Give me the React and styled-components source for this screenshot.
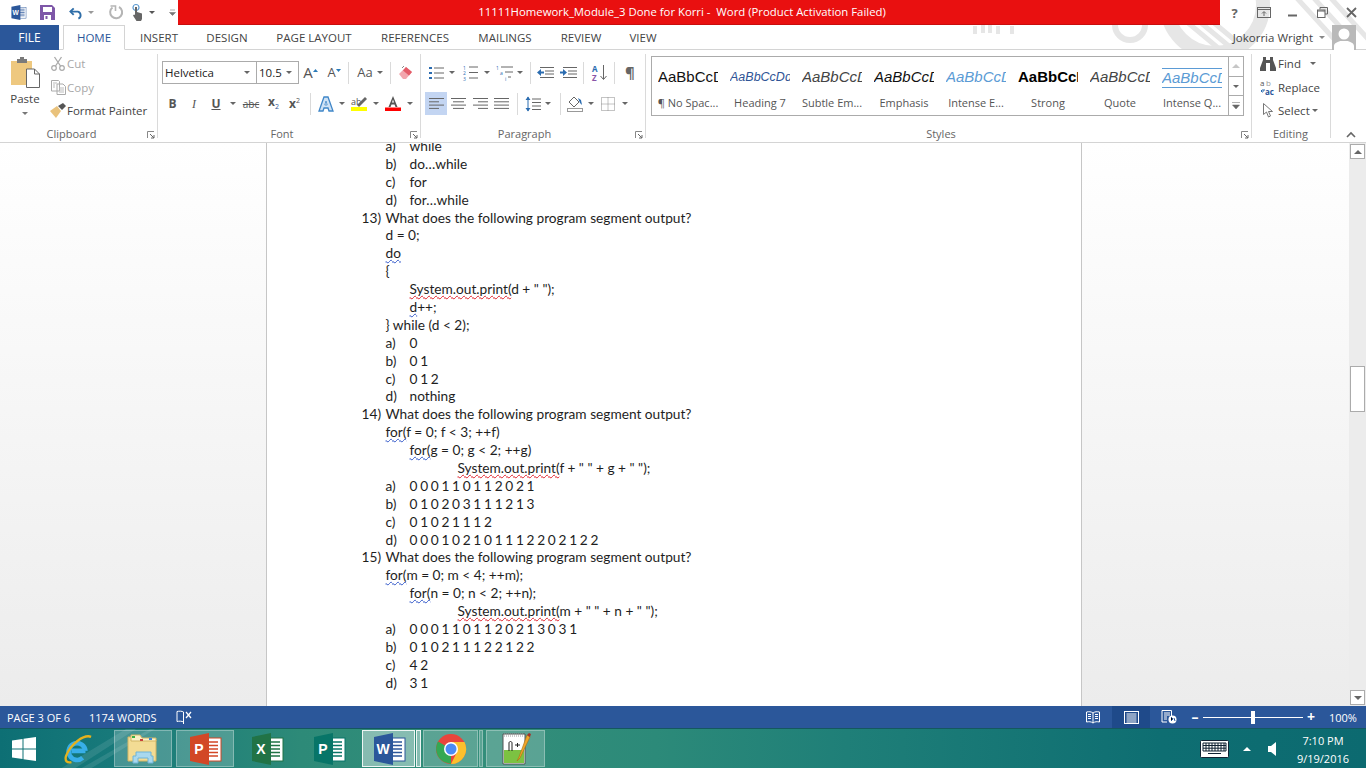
import React from "react";
import styled, { createGlobalStyle } from "styled-components";

const Global = createGlobalStyle`
    html, body { margin: 0; padding: 0; background: #fff; overflow: hidden; }
    * { box-sizing: border-box; }
    #root { width: 1366px; height: 768px; }
    svg { overflow: visible; }
`;

const Screen = styled.div`
    width: 1366px;
    height: 768px;
    display: flex;
    flex-direction: column;
    overflow: hidden;
    font-family: "Open Sans", "Liberation Sans", sans-serif;
    font-size: 11.5px;
    color: #444;
`;

/* ---------- header ---------- */
const Header = styled.div`
    position: relative;
    height: 50px;
    flex: none;
    background: #fff;
`;
const Art = styled.svg`
    position: absolute;
    left: 900px;
    top: 0;
    overflow: hidden;
    pointer-events: none;
`;
const TitleRow = styled.div`
    position: relative;
    height: 25px;
    display: flex;
`;
const Quick = styled.div`
    width: 178px;
    flex: none;
    display: flex;
    align-items: center;
    padding-left: 10px;
`;
const QuickItem = styled.span`
    width: ${(p) => p.$w}px;
    flex: none;
    display: flex;
    align-items: center;
`;
const TitleBar = styled.div`
    width: 1042px;
    height: 24.5px;
    flex: none;
    background: #e91010;
    border-bottom: 1px solid #c90d0d;
    color: #fff;
    font-size: 11.35px;
    padding-right: 34px;
    display: flex;
    align-items: center;
    justify-content: center;
    white-space: pre;
`;
const WindowBtns = styled.div`
    flex: 1;
    display: flex;
    align-items: center;
`;
const WinBtn = styled.span`
    width: 29.2px;
    display: flex;
    justify-content: center;
    color: #666;
    font-weight: 700;
    font-size: 13px;
`;
const TabRow = styled.div`
    position: relative;
    height: 25px;
    display: flex;
    align-items: stretch;
    border-bottom: 1px solid #d4d4d4;
`;
const FileTab = styled.div`
    width: 59px;
    margin-bottom: -1px;
    background: #2b579a;
    color: #fff;
    font-size: 12px;
    display: flex;
    align-items: center;
    justify-content: center;
`;
const Tab = styled.div`
    width: ${(p) => p.$w}px;
    flex: none;
    font-size: 11.5px;
    display: flex;
    align-items: center;
    justify-content: center;
    color: ${(p) => (p.$active ? "#2b579a" : "#444")};
    margin-left: ${(p) => p.$ml || 0}px;
    ${(p) =>
        p.$active &&
        `border: 1px solid #d4d4d4; border-bottom: 1px solid #fff; margin-bottom: -1px; background: #fff;`}
`;
const User = styled.div`
    margin-left: auto;
    display: flex;
    align-items: center;
    font-size: 11.5px;
    color: #444;
    padding-right: 10px;
`;
const Avatar = styled.svg`
    display: block;
    margin-left: 7px;
`;

/* ---------- ribbon ---------- */
const Ribbon = styled.div`
    height: 93px;
    flex: none;
    display: flex;
    background: #fff;
    border-bottom: 1px solid #d4d4d4;
`;
const Group = styled.div`
    position: relative;
    width: ${(p) => p.$w}px;
    flex: none;
    display: flex;
    flex-direction: column;
    &::after {
        content: "";
        position: absolute;
        right: 0;
        top: 4px;
        bottom: 4px;
        width: 1px;
        background: #dadada;
    }
`;
const GroupBody = styled.div`
    flex: 1;
    min-height: 0;
    display: flex;
    padding-left: ${(p) => p.$pl || 0}px;
`;
const GroupLabel = styled.div`
    height: 16px;
    flex: none;
    font-size: 11px;
    line-height: 16px;
    color: #666;
    text-align: center;
    padding-right: ${(p) => p.$pr || 0}px;
`;
const Launcher = styled.svg`
    position: absolute;
    right: 3px;
    bottom: 3px;
`;
const PasteCol = styled.div`
    width: 44px;
    flex: none;
    display: flex;
    flex-direction: column;
    align-items: center;
    padding: 7px 0 0 6px;
`;
const PasteLabel = styled.div`
    margin-top: 3px;
    font-size: 11.5px;
    line-height: 16px;
    color: #444;
`;
const PasteCaret = styled.i`
    margin-top: 5px;
    border-left: 3px solid transparent;
    border-right: 3px solid transparent;
    border-top: 3px solid #777;
`;
const SmallCol = styled.div`
    display: flex;
    flex-direction: column;
    padding-top: 2px;
    margin-left: ${(p) => p.$ml || 0}px;
`;
const SmallBtn = styled.div`
    height: 23.5px;
    display: flex;
    align-items: center;
    white-space: nowrap;
    font-size: 11.5px;
    color: ${(p) => (p.$off ? "#a8a8a8" : "#444")};
`;
const SmallIcon = styled.span`
    width: ${(p) => p.$w || 18}px;
    flex: none;
    display: flex;
    justify-content: center;
`;
const ToolStack = styled.div`
    display: flex;
    flex-direction: column;
    gap: 8px;
    padding: 11px 0 0 4px;
`;
const ToolRow = styled.div`
    height: 23px;
    display: flex;
    align-items: center;
`;
const Tool = styled.span`
    width: ${(p) => p.$w}px;
    height: 23px;
    flex: none;
    display: flex;
    align-items: center;
    justify-content: center;
    color: #555;
    background: ${(p) => (p.$on ? "#c3d5f2" : "transparent")};
`;
const Sep = styled.span`
    width: 1px;
    height: 22px;
    flex: none;
    background: #dadada;
    margin-left: ${(p) => p.$ml || 0}px;
    margin-right: ${(p) => p.$mr || 0}px;
`;
const Caret = styled.i`
    display: inline-block;
    width: 0;
    height: 0;
    margin-left: ${(p) => p.$ml || 0}px;
    border-left: 3px solid transparent;
    border-right: 3px solid transparent;
    border-top: 3px solid ${(p) => p.$color || "#666"};
`;
const FontBox = styled.div`
    width: ${(p) => p.$w}px;
    height: 23px;
    flex: none;
    display: flex;
    align-items: center;
    justify-content: space-between;
    padding: 0 6px 0 2px;
    margin-left: ${(p) => p.$ml || 0}px;
    border: 1px solid #ababab;
    color: #222;
    font-size: 11.5px;
`;
const ToolGlyph = styled.span`
    font-family: ${(p) => (p.$serif ? '"Liberation Serif", serif' : '"Open Sans", sans-serif')};
    font-weight: ${(p) => p.$weight || 400};
    font-style: ${(p) => (p.$italic ? "italic" : "normal")};
    font-size: ${(p) => p.$size || 13}px;
    color: ${(p) => p.$color || "#555"};
    text-decoration: ${(p) => p.$deco || "none"};
    line-height: 1;
`;
const Sub = styled.span`
    font-size: 7px;
    color: ${(p) => p.$color || "#2b579a"};
    vertical-align: ${(p) => (p.$up ? "super" : "sub")};
    font-weight: 400;
`;

/* ---------- styles gallery ---------- */
const Gallery = styled.div`
    width: 593px;
    height: 60px;
    margin: 6px 0 0 5px;
    display: flex;
    border: 1px solid #ababab;
`;
const GalleryItems = styled.div`
    flex: 1;
    display: flex;
`;
const StyleCard = styled.div`
    width: 72px;
    flex: none;
    display: flex;
    flex-direction: column;
    align-items: center;
`;
const Preview = styled.div`
    width: 60px;
    height: 26px;
    margin-top: 7px;
    overflow: hidden;
    white-space: nowrap;
    text-align: left;
    font-family: "Liberation Sans", sans-serif;
    font-size: 15px;
    line-height: 26px;
    color: ${(p) => p.$color || "#111"};
    font-style: ${(p) => (p.$italic ? "italic" : "normal")};
    font-weight: ${(p) => (p.$bold ? 700 : 400)};
    ${(p) =>
        p.$lined &&
        "border-top: 1px solid #5b9bd5; border-bottom: 1px solid #5b9bd5; height: 20px; margin-top: 11px; margin-bottom: 2px; line-height: 18px;"}
    ${(p) => p.$small && "font-size: 12.5px;"}
`;
const StyleName = styled.div`
    margin-top: 5px;
    font-size: 11px;
    line-height: 16px;
    color: #555;
    white-space: nowrap;
`;
const GalleryScroll = styled.div`
    width: 15px;
    flex: none;
    display: flex;
    flex-direction: column;
    border-left: 1px solid #ababab;
`;
const GalleryBtn = styled.div`
    flex: 1;
    display: flex;
    align-items: center;
    justify-content: center;
    & + & {
        border-top: 1px solid #ababab;
    }
`;
const UpCaret = styled.i`
    width: 0;
    height: 0;
    border-left: 4px solid transparent;
    border-right: 4px solid transparent;
    border-bottom: 4px solid ${(p) => p.$color || "#c6c6c6"};
`;
const Collapse = styled.div`
    display: flex;
    align-self: flex-end;
    margin: 0 0 4px 15px;
`;

/* ---------- document ---------- */
const Doc = styled.div`
    flex: 1;
    min-height: 0;
    display: flex;
    background: linear-gradient(#fff, #ececec);
`;
const Canvas = styled.div`
    flex: 1;
    display: flex;
    padding-left: 266px;
    overflow: hidden;
`;
const Page = styled.div`
    width: 816px;
    background: #fff;
    border-left: 1px solid #c6c6c6;
    border-right: 1px solid #c6c6c6;
    overflow: hidden;
    padding-left: 94.5px;
    font-family: Lato, "Liberation Sans", sans-serif;
    font-size: 13.7px;
    color: #1e1e1e;
`;
const Lines = styled.div`
    margin-top: -6px;
`;
const Line = styled.div`
    height: 17.9px;
    line-height: 17.9px;
    display: flex;
    white-space: pre;
    padding-left: ${(p) => p.$indent}px;
`;
const Marker = styled.span`
    width: 24px;
    flex: none;
`;
const LineText = styled.span`
    word-spacing: ${(p) => (p.$digits ? "-0.8px" : "0")};
`;
const Spell = styled.span`
    text-decoration: underline wavy ${(p) => (p.$blue ? "#2f55c8" : "#e0202a")};
    text-decoration-thickness: 1px;
    text-decoration-skip-ink: none;
    text-underline-offset: 1px;
`;
const ScrollBar = styled.div`
    width: 17px;
    flex: none;
    display: flex;
    flex-direction: column;
    background: #ececec;
    padding: 1px;
`;
const ScrollBtn = styled.div`
    height: 15px;
    flex: none;
    background: #fff;
    border: 1px solid #ababab;
    display: flex;
    align-items: center;
    justify-content: center;
`;
const Thumb = styled.div`
    height: 46px;
    flex: none;
    margin-top: 207px;
    background: #fff;
    border: 1px solid #ababab;
`;
const DownBtn = styled(ScrollBtn)`
    margin-top: auto;
`;
const DownCaret = styled.i`
    width: 0;
    height: 0;
    border-left: 4px solid transparent;
    border-right: 4px solid transparent;
    border-top: 4px solid #666;
`;

/* ---------- status bar ---------- */
const Status = styled.div`
    height: 22px;
    flex: none;
    display: flex;
    align-items: center;
    background: #2b579a;
    color: #fff;
    font-size: 11px;
    padding-left: 7px;
`;
const StatusText = styled.span`
    width: ${(p) => p.$w}px;
    flex: none;
    white-space: nowrap;
`;
const ViewBtn = styled.span`
    width: 38px;
    height: 22px;
    flex: none;
    display: flex;
    align-items: center;
    justify-content: center;
    background: ${(p) => (p.$on ? "#1f4a8a" : "transparent")};
    margin-left: ${(p) => p.$ml || 0}px;
`;
const Zoom = styled.div`
    display: flex;
    align-items: center;
    margin-left: 3px;
    color: #fff;
`;
const ZoomTrack = styled.div`
    position: relative;
    width: 100px;
    height: 1px;
    margin: 0 4px;
    background: #fff;
`;
const ZoomThumb = styled.span`
    position: absolute;
    left: 48px;
    top: -6px;
    width: 4px;
    height: 13px;
    background: #fff;
`;
const ZoomMark = styled.span`
    width: 8px;
    text-align: center;
    font-weight: 700;
    font-size: 14px;
    line-height: 1;
`;
const ZoomValue = styled.span`
    margin-left: 14px;
    font-size: 11px;
`;

/* ---------- taskbar ---------- */
const Taskbar = styled.div`
    position: relative;
    height: 40px;
    flex: none;
    display: flex;
    align-items: stretch;
    padding: 1px 0 1px 12px;
    gap: 4px;
    color: #fff;
    border-top: 1px solid #14585f;
    background: linear-gradient(90deg, #0d6f74 0%, #17797a 8%, #2d8a78 22%, #338e7a 36%, #2c8a79 48%, #1f7f78 62%, #0e6e72 85%, #0c6a70 100%);
`;
const Streaks = styled.svg`
    position: absolute;
    left: 60px;
    top: 0;
    pointer-events: none;
`;
const StartSlot = styled.div`
    width: 98px;
    flex: none;
    display: flex;
    align-items: center;
    gap: 28px;
    position: relative;
`;
const Tile = styled.div`
    position: relative;
    width: ${(p) => p.$w || 58}px;
    flex: none;
    display: flex;
    align-items: center;
    justify-content: center;
    margin-right: ${(p) => p.$mr || 0}px;
    border: 1px solid ${(p) => (p.$active ? "rgba(255,255,255,.85)" : p.$open ? "rgba(255,255,255,.3)" : "transparent")};
    background: ${(p) => (p.$active ? "rgba(255,255,255,.42)" : p.$open ? "rgba(255,255,255,.2)" : "transparent")};
`;
const Tray = styled.div`
    margin-left: auto;
    display: flex;
    align-items: center;
    padding-right: 3px;
`;
const TrayIcon = styled.svg`
    display: block;
    margin-left: ${(p) => p.$ml || 0}px;
`;
const Clock = styled.div`
    width: 80px;
    margin-left: 7px;
    padding-top: 3px;
    text-align: center;
    font-size: 11px;
    line-height: 18px;
`;

/* ---------- icons ---------- */
const OfficeLogo = ({ size = 36, color, letter, dark }) => (
    <svg width={size} height={size} viewBox="0 0 36 36" style={{ display: "block" }}>
        <rect x="15" y="7" width="19" height="23" fill="#fff" stroke={color} strokeWidth="1" />
        <path d="M20 11h11M20 14.500h11M20 18h11M20 21.500h11M20 25h11" stroke={dark || color} strokeWidth="1.500" />
        <path d="M3 6 22 2v32L3 30z" fill={color} />
        <text x="12" y="23" fontFamily="Liberation Sans, sans-serif" fontWeight="700" fontSize="14" fill="#fff" textAnchor="middle">
            {letter}
        </text>
    </svg>
);
const Chevron = ({ stroke = "#666" }) => (
    <svg width="10" height="7" viewBox="0 0 10 7">
        <path d="M1 6l4-4 4 4" fill="none" stroke={stroke} strokeWidth="1.600" />
    </svg>
);
const LauncherIcon = () => (
    <Launcher width="8" height="8" viewBox="0 0 8 8">
        <path d="M.5 7V.5H7" fill="none" stroke="#888" />
        <path d="M3 3l4 4M7 4v3H4" fill="none" stroke="#666" />
    </Launcher>
);
const Bars = ({ rows, w = 17 }) => (
    <svg width={w} height="13" viewBox={`0 0 ${w} 13`}>
        {rows.map(([x1, x2], i) => (
            <path key={i} d={`M${x1} ${1.500 + i * 3.3}H${x2}`} stroke="#666" strokeWidth="1" />
        ))}
    </svg>
);

const gallery = [
    { name: "¶ No Spac...", sample: "AaBbCcDd", color: "#111" },
    { name: "Heading 7", sample: "AaBbCcDd", color: "#2f5496", italic: true, small: true },
    { name: "Subtle Em...", sample: "AaBbCcDd", color: "#444", italic: true },
    { name: "Emphasis", sample: "AaBbCcDd", color: "#111", italic: true },
    { name: "Intense E...", sample: "AaBbCcDd", color: "#5b9bd5", italic: true },
    { name: "Strong", sample: "AaBbCcDd", color: "#000", bold: true },
    { name: "Quote", sample: "AaBbCcDd", color: "#444", italic: true },
    { name: "Intense Q...", sample: "AaBbCcDd", color: "#5b9bd5", italic: true, lined: true },
];

const Q = 0;
const A = 24;
const B = 48;
const C = 96;

const docLines = [
    { indent: A, mark: "a)", parts: ["while"] },
    { indent: A, mark: "b)", parts: ["do…while"] },
    { indent: A, mark: "c)", parts: ["for"] },
    { indent: A, mark: "d)", parts: ["for…while"] },
    { indent: Q, mark: "13)", parts: ["What does the following program segment output?"] },
    { indent: A, parts: ["d = 0;"] },
    { indent: A, parts: [{ blue: "do" }] },
    { indent: A, parts: ["{"] },
    { indent: B, parts: [{ red: "System.out.print(" }, 'd + " ");'] },
    { indent: B, parts: [{ blue: "d" }, "++;"] },
    { indent: A, parts: ["} while (d < 2);"] },
    { indent: A, mark: "a)", digits: true, parts: ["0"] },
    { indent: A, mark: "b)", digits: true, parts: ["0 1"] },
    { indent: A, mark: "c)", digits: true, parts: ["0 1 2"] },
    { indent: A, mark: "d)", parts: ["nothing"] },
    { indent: Q, mark: "14)", parts: ["What does the following program segment output?"] },
    { indent: A, parts: [{ blue: "for(" }, "f = 0; f < 3; ++f)"] },
    { indent: B, parts: [{ blue: "for(" }, "g = 0; g < 2; ++g)"] },
    { indent: C, parts: [{ red: "System.out.print(" }, 'f + " " + g + " ");'] },
    { indent: A, mark: "a)", digits: true, parts: ["0 0 0 1 1 0 1 1 2 0 2 1"] },
    { indent: A, mark: "b)", digits: true, parts: ["0 1 0 2 0 3 1 1 1 2 1 3"] },
    { indent: A, mark: "c)", digits: true, parts: ["0 1 0 2 1 1 1 2"] },
    { indent: A, mark: "d)", digits: true, parts: ["0 0 0 1 0 2 1 0 1 1 1 2 2 0 2 1 2 2"] },
    { indent: Q, mark: "15)", parts: ["What does the following program segment output?"] },
    { indent: A, parts: [{ blue: "for(" }, "m = 0; m < 4; ++m);"] },
    { indent: B, parts: [{ blue: "for(" }, "n = 0; n < 2; ++n);"] },
    { indent: C, parts: [{ red: "System.out.print(" }, 'm + " " + n + " ");'] },
    { indent: A, mark: "a)", digits: true, parts: ["0 0 0 1 1 0 1 1 2 0 2 1 3 0 3 1"] },
    { indent: A, mark: "b)", digits: true, parts: ["0 1 0 2 1 1 1 2 2 1 2 2"] },
    { indent: A, mark: "c)", digits: true, parts: ["4 2"] },
    { indent: A, mark: "d)", digits: true, parts: ["3 1"] },
];

function DocLine({ line }) {
    return (
        <Line $indent={line.indent}>
            {line.mark && <Marker>{line.mark}</Marker>}
            <LineText $digits={line.digits}>
                {line.parts.map((p, i) =>
                    typeof p === "string" ? p : <Spell key={i} $blue={!!p.blue}>{p.blue || p.red}</Spell>
                )}
            </LineText>
        </Line>
    );
}

export default function App() {
    return (
        <Screen>
            <Global />
            <Header>
                <Art width="466" height="50" viewBox="0 0 466 50">
                    <g fill="none" stroke="#e6e6e6">
                        <circle cx="230" cy="25" r="15" strokeWidth="6" />
                        <circle cx="315" cy="5" r="48" strokeWidth="14" />
                        <path d="M75 26v8M83 25v8M90 25v8M98 26v8M112 26v8" strokeWidth="4" />
                        <path d="M287 22l36 30M300 22l36 30M313 22l36 30M395-4l40 44M412-4l40 44M429-4l40 44" strokeWidth="5" />
                    </g>
                </Art>
                <TitleRow>
                    <Quick>
                        <QuickItem $w={30}>
                            <OfficeLogo size={17} color="#2b579a" letter="W" />
                        </QuickItem>
                        <QuickItem $w={29}>
                            <svg width="15" height="15" viewBox="0 0 15 15">
                                <path d="M0 0h12l3 3v12H0z" fill="#7e57a8" />
                                <rect x="3" y="2" width="9" height="5" fill="#fff" />
                                <rect x="4" y="10" width="7" height="5" fill="#fff" />
                                <rect x="5.500" y="11" width="2" height="3" fill="#7e57a8" />
                            </svg>
                        </QuickItem>
                        <QuickItem $w={19}>
                            <svg width="15" height="14" viewBox="0 0 16 14">
                                <path d="M5 2 1.500 5.500 5 9" fill="none" stroke="#2f6ea8" strokeWidth="2" />
                                <path d="M2 5.500h7.500a4 4 0 0 1 .5 7.500" fill="none" stroke="#2f6ea8" strokeWidth="2" />
                            </svg>
                        </QuickItem>
                        <QuickItem $w={21}>
                            <Caret $color="#999" />
                        </QuickItem>
                        <QuickItem $w={23}>
                            <svg width="15" height="15" viewBox="0 0 15 15">
                                <path d="M3.500 2.500a6 6 0 1 0 6.500-.5" fill="none" stroke="#b5b5b5" strokeWidth="2" />
                                <path d="M1.500 1h5v5" fill="none" stroke="#b5b5b5" strokeWidth="1.600" />
                            </svg>
                        </QuickItem>
                        <QuickItem $w={17}>
                            <svg width="12" height="17" viewBox="0 0 12 17">
                                <circle cx="4" cy="3.500" r="3" fill="none" stroke="#5d9bd1" strokeWidth="1.200" />
                                <path d="M3 3h2v5l5 1.500V15l-1 2H4.500L1 11.500 2 10.500l1 .5z" fill="#666" />
                            </svg>
                        </QuickItem>
                        <QuickItem $w={20}>
                            <Caret $color="#555" />
                        </QuickItem>
                        <QuickItem $w={9}>
                            <svg width="7" height="7" viewBox="0 0 7 7">
                                <path d="M1 1h5M0.500 3.500h6l-3 3z" fill="#777" stroke="#777" strokeWidth=".6" />
                            </svg>
                        </QuickItem>
                    </Quick>
                    <TitleBar>{"11111Homework_Module_3 Done for Korri -  Word (Product Activation Failed)"}</TitleBar>
                    <WindowBtns>
                        <WinBtn>?</WinBtn>
                        <WinBtn>
                            <svg width="14" height="12" viewBox="0 0 14 12">
                                <rect x=".5" y=".5" width="13" height="10" fill="none" stroke="#666" />
                                <path d="M.5 2.500h13" stroke="#666" />
                                <path d="M7 9V5M5 6.500l2-2 2 2" fill="none" stroke="#666" />
                            </svg>
                        </WinBtn>
                        <WinBtn>
                            <svg width="11" height="12" viewBox="0 0 11 12">
                                <path d="M1 8.500h9" stroke="#666" strokeWidth="2" />
                            </svg>
                        </WinBtn>
                        <WinBtn>
                            <svg width="11" height="11" viewBox="0 0 11 11">
                                <path d="M3 2.500V.5h7.500V7H8" fill="none" stroke="#666" />
                                <rect x=".5" y="3" width="7.500" height="7.500" fill="none" stroke="#666" />
                                <path d="M.5 4h7.500" stroke="#666" />
                            </svg>
                        </WinBtn>
                        <WinBtn>
                            <svg width="11" height="11" viewBox="0 0 11 11">
                                <path d="M1 1l9 9M10 1l-9 9" stroke="#666" strokeWidth="1.800" />
                            </svg>
                        </WinBtn>
                    </WindowBtns>
                </TitleRow>
                <TabRow>
                    <FileTab>FILE</FileTab>
                    <Tab $active $w={62} $ml={4}>HOME</Tab>
                    <Tab $w={68}>INSERT</Tab>
                    <Tab $w={68}>DESIGN</Tab>
                    <Tab $w={106}>PAGE LAYOUT</Tab>
                    <Tab $w={96}>REFERENCES</Tab>
                    <Tab $w={84}>MAILINGS</Tab>
                    <Tab $w={68}>REVIEW</Tab>
                    <Tab $w={56}>VIEW</Tab>
                    <User>
                        Jokorria Wright
                        <Caret $color="#888" $ml={6} />
                        <Avatar width="24" height="25" viewBox="0 0 24 25">
                            <rect width="24" height="25" fill="#b9b9b9" />
                            <circle cx="12" cy="9" r="5.500" fill="#fff" />
                            <path d="M2 25v-4c0-3 4-4 6-5h8c2 1 6 2 6 5v4z" fill="#fff" />
                        </Avatar>
                    </User>
                </TabRow>
            </Header>

            <Ribbon>
                <Group $w={158}>
                    <GroupBody>
                        <PasteCol>
                            <svg width="29" height="31" viewBox="0 0 29 31">
                                <path d="M0 4h21v24H0z" fill="#eec87f" />
                                <path d="M6 2h3V0h4v2h3v4H6z" fill="#7a7a7a" />
                                <path d="M15.500 12h8l5 5v13.500h-13z" fill="#fff" stroke="#666" />
                                <path d="M23.500 12v5h5" fill="none" stroke="#666" />
                            </svg>
                            <PasteLabel>Paste</PasteLabel>
                            <PasteCaret />
                        </PasteCol>
                        <SmallCol $ml={5}>
                            <SmallBtn $off>
                                <SmallIcon>
                                    <svg width="14" height="15" viewBox="0 0 14 15">
                                        <circle cx="3" cy="12" r="2.300" fill="none" stroke="#aaa" strokeWidth="1.200" />
                                        <circle cx="11" cy="12" r="2.300" fill="none" stroke="#aaa" strokeWidth="1.200" />
                                        <path d="M4.500 10 10.500 1M9.500 10 3.500 1" stroke="#aaa" strokeWidth="1.300" />
                                    </svg>
                                </SmallIcon>
                                Cut
                            </SmallBtn>
                            <SmallBtn $off>
                                <SmallIcon>
                                    <svg width="15" height="15" viewBox="0 0 15 15">
                                        <path d="M.5.500h7l1 1V11H.5zM6 4h6l2.500 2.500v8H6z" fill="#fff" stroke="#aaa" />
                                        <path d="M2 3h4M2 5h2M2 7h2M8 8h5M8 10h5M8 12h5" stroke="#bbb" />
                                    </svg>
                                </SmallIcon>
                                Copy
                            </SmallBtn>
                            <SmallBtn>
                                <SmallIcon>
                                    <svg width="16" height="15" viewBox="0 0 16 15">
                                        <path d="M0 8 7 3l4 5-5 7z" fill="#e9c27c" />
                                        <path d="M8 3l5-3 3 3-4 4z" fill="#555" />
                                    </svg>
                                </SmallIcon>
                                Format Painter
                            </SmallBtn>
                        </SmallCol>
                    </GroupBody>
                    <GroupLabel $pr={15}>Clipboard</GroupLabel>
                    <LauncherIcon />
                </Group>

                <Group $w={263}>
                    <GroupBody>
                        <ToolStack>
                            <ToolRow>
                                <FontBox $w={95}>
                                    Helvetica
                                    <Caret />
                                </FontBox>
                                <FontBox $w={43} $ml={-1}>
                                    10.5
                                    <Caret />
                                </FontBox>
                                <Tool $w={23}>
                                    <ToolGlyph $size={15}>A</ToolGlyph>
                                    <svg width="5" height="8" viewBox="0 0 5 8"><path d="M0 3l2.500-3L5 3z" fill="#2b7bb9" /></svg>
                                </Tool>
                                <Tool $w={24}>
                                    <ToolGlyph $size={13}>A</ToolGlyph>
                                    <svg width="5" height="8" viewBox="0 0 5 8"><path d="M0 0l2.500 3L5 0z" fill="#2b7bb9" /></svg>
                                </Tool>
                                <Sep $ml={2} $mr={3} />
                                <Tool $w={36}>
                                    <ToolGlyph $size={13}>Aa</ToolGlyph>
                                    <Caret $ml={4} />
                                </Tool>
                                <Sep $ml={2} $mr={3} />
                                <Tool $w={24}>
                                    <svg width="16" height="15" viewBox="0 0 16 15">
                                        <path d="M1 9 8 2l6 5-6 7H5z" fill="#f2a6ad" />
                                        <path d="M8 2l6 5-3 3.500-6-5z" fill="#e45c68" />
                                        <path d="M6 1 4 3" stroke="#888" />
                                    </svg>
                                </Tool>
                            </ToolRow>
                            <ToolRow>
                                <Tool $w={21}><ToolGlyph $size={12} $weight={700}>B</ToolGlyph></Tool>
                                <Tool $w={22}><ToolGlyph $size={12} $italic $serif>I</ToolGlyph></Tool>
                                <Tool $w={22}><ToolGlyph $size={12} $weight={700} $deco="underline">U</ToolGlyph></Tool>
                                <Tool $w={12}><Caret /></Tool>
                                <Tool $w={24}><ToolGlyph $size={10} $deco="line-through">abc</ToolGlyph></Tool>
                                <Tool $w={21}><ToolGlyph $size={12} $weight={700}>x<Sub>2</Sub></ToolGlyph></Tool>
                                <Tool $w={21}><ToolGlyph $size={12} $weight={700}>x<Sub $up $color="#555">2</Sub></ToolGlyph></Tool>
                                <Sep $ml={5} $mr={4} />
                                <Tool $w={22}>
                                    <svg width="16" height="16" viewBox="0 0 16 16">
                                        <path d="M6 1h4l5 14h-4l-1-3H6l-1 3H1z" fill="#cfe2f5" stroke="#3f86c8" strokeWidth="1.300" />
                                        <path d="M8 5l-1.200 4h2.400z" fill="#fff" stroke="#3f86c8" strokeWidth=".8" />
                                    </svg>
                                </Tool>
                                <Tool $w={9}><Caret /></Tool>
                                <Tool $w={26}>
                                    <svg width="16" height="15" viewBox="0 0 16 15">
                                        <text x="0" y="9" fontSize="9" fontFamily="Open Sans, sans-serif" fill="#555">ab</text>
                                        <path d="M6 9 14 1l2 2-8 8z" fill="#666" />
                                        <rect y="11" width="16" height="4" fill="#ffff00" />
                                    </svg>
                                </Tool>
                                <Tool $w={8}><Caret /></Tool>
                                <Tool $w={26}>
                                    <svg width="16" height="15" viewBox="0 0 16 15">
                                        <path d="M8 0l4.500 11h-2L9.500 8.500h-3L5.500 11h-2zM7 6.500h2L8 3.500z" fill="#555" fillRule="evenodd" />
                                        <rect y="11.500" width="16" height="3.500" fill="#f00" />
                                    </svg>
                                </Tool>
                                <Tool $w={8}><Caret /></Tool>
                            </ToolRow>
                        </ToolStack>
                    </GroupBody>
                    <GroupLabel $pr={15}>Font</GroupLabel>
                    <LauncherIcon />
                </Group>

                <Group $w={225}>
                    <GroupBody>
                        <ToolStack>
                            <ToolRow>
                                <Tool $w={22}>
                                    <svg width="15" height="14" viewBox="0 0 15 14">
                                        <path d="M5 2h10M5 7h10M5 12h10" stroke="#666" />
                                        <path d="M0 1h3v2H0zM0 6h3v2H0zM0 11h3v2H0z" fill="#2b6cb0" />
                                    </svg>
                                </Tool>
                                <Tool $w={10}><Caret /></Tool>
                                <Tool $w={26}>
                                    <svg width="15" height="15" viewBox="0 0 15 15">
                                        <path d="M6 2h9M6 7.500h9M6 13h9" stroke="#666" />
                                        <text x="0" y="4.500" fontSize="5" fontFamily="Open Sans, sans-serif" fill="#2b6cb0">1</text>
                                        <text x="0" y="10" fontSize="5" fontFamily="Open Sans, sans-serif" fill="#2b6cb0">2</text>
                                        <text x="0" y="15.500" fontSize="5" fontFamily="Open Sans, sans-serif" fill="#2b6cb0">3</text>
                                    </svg>
                                </Tool>
                                <Tool $w={8}><Caret /></Tool>
                                <Tool $w={26}>
                                    <svg width="17" height="15" viewBox="0 0 17 15">
                                        <path d="M5 2h12M9 7h8M12 12h3" stroke="#666" />
                                        <text x="0" y="4.500" fontSize="5" fontFamily="Open Sans, sans-serif" fill="#2b6cb0">1</text>
                                        <text x="4" y="10" fontSize="5" fontFamily="Open Sans, sans-serif" fill="#2b6cb0">a</text>
                                        <text x="9" y="15.500" fontSize="5" fontFamily="Open Sans, sans-serif" fill="#2b6cb0">i</text>
                                    </svg>
                                </Tool>
                                <Tool $w={5}><Caret /></Tool>
                                <Sep $ml={8} $mr={3} />
                                <Tool $w={22}>
                                    <svg width="17" height="13" viewBox="0 0 17 13">
                                        <path d="M3 1.500h14M8 5h9M8 8h9M3 11.500h14" stroke="#666" />
                                        <path d="M0 6.500 4 3v2.500h3v2H4V10z" fill="#2b6cb0" />
                                    </svg>
                                </Tool>
                                <Tool $w={24}>
                                    <svg width="17" height="13" viewBox="0 0 17 13">
                                        <path d="M3 1.500h14M8 5h9M8 8h9M3 11.500h14" stroke="#666" />
                                        <path d="M7 6.500 3 3v2.500H0v2h3V10z" fill="#2b6cb0" />
                                    </svg>
                                </Tool>
                                <Sep $ml={3} $mr={3} />
                                <Tool $w={24}>
                                    <svg width="15" height="16" viewBox="0 0 15 16">
                                        <text x="0" y="7" fontSize="8" fontWeight="700" fontFamily="Open Sans, sans-serif" fill="#2b6cb0">A</text>
                                        <text x="0" y="15.500" fontSize="8" fontWeight="700" fontFamily="Open Sans, sans-serif" fill="#8a55a8">Z</text>
                                        <path d="M11.500 0v14M8.500 11l3 3.500 3-3.500" fill="none" stroke="#666" />
                                    </svg>
                                </Tool>
                                <Sep $ml={3} $mr={3} />
                                <Tool $w={24}><ToolGlyph $size={15} $color="#666" $weight={700}>¶</ToolGlyph></Tool>
                            </ToolRow>
                            <ToolRow>
                                <Tool $w={22} $on><Bars rows={[[1, 16], [1, 11], [1, 16], [1, 11]]} /></Tool>
                                <Tool $w={22}><Bars rows={[[1, 16], [3, 14], [1, 16], [3, 14]]} /></Tool>
                                <Tool $w={22}><Bars rows={[[1, 16], [6, 16], [1, 16], [6, 16]]} /></Tool>
                                <Tool $w={20}><Bars rows={[[1, 16], [1, 16], [1, 16], [1, 16]]} /></Tool>
                                <Sep $ml={6} $mr={4} />
                                <Tool $w={22}>
                                    <svg width="16" height="16" viewBox="0 0 16 16">
                                        <path d="M7 3h9M7 6.500h9M7 10h9M7 13.500h9" stroke="#666" />
                                        <path d="M3 1v14" stroke="#2b6cb0" />
                                        <path d="M0.500 4 3 .5 5.500 4zM0.500 12 3 15.500 5.500 12z" fill="#2b6cb0" />
                                    </svg>
                                </Tool>
                                <Tool $w={8}><Caret /></Tool>
                                <Sep $ml={8} $mr={4} />
                                <Tool $w={20}>
                                    <svg width="17" height="16" viewBox="0 0 17 16">
                                        <path d="M7 1l5 5-5 5-5-5z" fill="#fff" stroke="#666" />
                                        <path d="M11 2l3 2 1 5-2-2z" fill="#2b6cb0" />
                                        <rect x=".5" y="12.500" width="15" height="3" fill="#fff" stroke="#999" />
                                    </svg>
                                </Tool>
                                <Tool $w={12}><Caret /></Tool>
                                <Tool $w={22}>
                                    <svg width="14" height="14" viewBox="0 0 14 14">
                                        <rect x=".5" y=".5" width="13" height="13" fill="none" stroke="#888" strokeDasharray="1 1" />
                                        <path d="M7 .5v13M.5 7h13" stroke="#888" strokeDasharray="1 1" />
                                    </svg>
                                </Tool>
                                <Tool $w={12}><Caret /></Tool>
                            </ToolRow>
                        </ToolStack>
                    </GroupBody>
                    <GroupLabel $pr={18}>Paragraph</GroupLabel>
                    <LauncherIcon />
                </Group>

                <Group $w={606}>
                    <GroupBody>
                        <Gallery>
                            <GalleryItems>
                                {gallery.map((g) => (
                                    <StyleCard key={g.name}>
                                        <Preview $color={g.color} $italic={g.italic} $bold={g.bold} $lined={g.lined} $small={g.small}>
                                            {g.sample}
                                        </Preview>
                                        <StyleName>{g.name}</StyleName>
                                    </StyleCard>
                                ))}
                            </GalleryItems>
                            <GalleryScroll>
                                <GalleryBtn><UpCaret /></GalleryBtn>
                                <GalleryBtn><Caret $color="#666" /></GalleryBtn>
                                <GalleryBtn>
                                    <svg width="8" height="7" viewBox="0 0 8 7">
                                        <path d="M0 .500h8M.5 3h7L4 7z" fill="#666" stroke="#666" strokeWidth=".5" />
                                    </svg>
                                </GalleryBtn>
                            </GalleryScroll>
                        </Gallery>
                    </GroupBody>
                    <GroupLabel $pr={16}>Styles</GroupLabel>
                    <LauncherIcon />
                </Group>

                <Group $w={79}>
                    <GroupBody $pl={6}>
                        <SmallCol>
                            <SmallBtn>
                                <SmallIcon $w={20}>
                                    <svg width="16" height="14" viewBox="0 0 16 14">
                                        <path d="M3 0h3v3h4V0h3v3l3 8v3h-6V6H6v8H0v-3l3-8z" fill="#555" />
                                    </svg>
                                </SmallIcon>
                                Find
                                <Caret $ml={9} />
                            </SmallBtn>
                            <SmallBtn>
                                <SmallIcon $w={20}>
                                    <svg width="16" height="16" viewBox="0 0 16 16">
                                        <text x="0" y="7" fontSize="8" fontFamily="Open Sans, sans-serif" fill="#555">a</text>
                                        <text x="6" y="7" fontSize="8" fontFamily="Open Sans, sans-serif" fill="#999">b</text>
                                        <text x="5" y="16" fontSize="8" fontWeight="700" fontFamily="Open Sans, sans-serif" fill="#2b579a">ac</text>
                                        <path d="M4 10v2H1M2.500 10.500 1 12l1.500 1.500" fill="none" stroke="#2b6cb0" />
                                    </svg>
                                </SmallIcon>
                                Replace
                            </SmallBtn>
                            <SmallBtn>
                                <SmallIcon $w={20}>
                                    <svg width="10" height="15" viewBox="0 0 10 15">
                                        <path d="M.5.500v11l3-2.500 2 5 2-1-2-4.500h4z" fill="#fff" stroke="#777" />
                                    </svg>
                                </SmallIcon>
                                Select
                                <Caret $ml={2} />
                            </SmallBtn>
                        </SmallCol>
                    </GroupBody>
                    <GroupLabel $pr={2}>Editing</GroupLabel>
                </Group>
                <Collapse>
                    <Chevron />
                </Collapse>
            </Ribbon>

            <Doc>
                <Canvas>
                    <Page>
                        <Lines>
                            {docLines.map((line, i) => (
                                <DocLine key={i} line={line} />
                            ))}
                        </Lines>
                    </Page>
                </Canvas>
                <ScrollBar>
                    <ScrollBtn><UpCaret $color="#666" /></ScrollBtn>
                    <Thumb />
                    <DownBtn><DownCaret /></DownBtn>
                </ScrollBar>
            </Doc>

            <Status>
                <StatusText $w={82}>PAGE 3 OF 6</StatusText>
                <StatusText $w={87}>1174 WORDS</StatusText>
                <svg width="16" height="15" viewBox="0 0 16 15">
                    <path d="M7.500 2C6 1 3 1 1 1.500v10C3 11 6 11 7.500 12V2z" fill="none" stroke="#fff" />
                    <path d="M7.500 14V2" stroke="#fff" />
                    <path d="M10 2l5 6M15 2l-5 6" stroke="#fff" strokeWidth="1.200" />
                </svg>
                <ViewBtn $ml={882}>
                    <svg width="14" height="13" viewBox="0 0 14 13">
                        <path d="M7 2C5 .5 3 .5 .5 1v10C3 10.500 5 10.500 7 12c2-1.500 4-1.500 6.500-1V1C11 .5 9 .5 7 2zM7 2v10" fill="none" stroke="#fff" />
                        <path d="M2 3.500h3M2 5.500h3M2 7.500h3M9 3.500h3M9 5.500h3M9 7.500h3" stroke="#fff" />
                    </svg>
                </ViewBtn>
                <ViewBtn $on>
                    <svg width="15" height="13" viewBox="0 0 15 13">
                        <rect x=".5" y=".5" width="14" height="12" fill="none" stroke="#fff" />
                        <path d="M2.500 3h10M2.500 5h10M2.500 7h10M2.500 9h10M2.500 11h10" stroke="#fff" />
                    </svg>
                </ViewBtn>
                <ViewBtn>
                    <svg width="16" height="14" viewBox="0 0 16 14">
                        <path d="M1 .5h9.500V6M1 .5V12h5" fill="none" stroke="#fff" />
                        <path d="M3 3h6M3 5h6M3 7h3M3 9h3" stroke="#fff" />
                        <circle cx="11.500" cy="9.500" r="4" fill="#fff" />
                        <path d="M10 7l2 2-2 2M13 8l1 3" stroke="#2b579a" />
                    </svg>
                </ViewBtn>
                <Zoom>
                    <ZoomMark>–</ZoomMark>
                    <ZoomTrack><ZoomThumb /></ZoomTrack>
                    <ZoomMark>+</ZoomMark>
                    <ZoomValue>100%</ZoomValue>
                </Zoom>
            </Status>

            <Taskbar>
                <Streaks width="200" height="40" viewBox="0 0 200 40">
                    <path d="M0 40 66 0h10L14 40zM20 40 90 0h5L30 40z" fill="#fff" opacity=".1" />
                </Streaks>
                <StartSlot>
                    <svg width="24" height="24" viewBox="0 0 24 24">
                        <path d="M0 3.500 10.500 2v9.500H0zM11.500 1.800 24 0v11.500H11.500zM0 12.500h10.500V22L0 20.500zM11.500 12.500H24V24l-12.500-1.800z" fill="#fff" />
                    </svg>
                    <svg width="28" height="32" viewBox="0 0 30 32">
                        <path d="M8 18h15M23 18a9 9 0 1 0-3 7.500" fill="none" stroke="#38aee8" strokeWidth="5" />
                        <path d="M29 3C22 0 7 10 2 24c-1 5 1 7 6 6" fill="none" stroke="#e3b21e" strokeWidth="2.500" />
                    </svg>
                </StartSlot>
                <Tile $open>
                    <svg width="32" height="30" viewBox="0 0 32 30">
                        <path d="M1 3h9l2 3h17v21H1z" fill="#f3dc94" stroke="#d2b565" />
                        <path d="M4 1h9l2 3h14v3H4z" fill="#fbf0c4" stroke="#d2b565" />
                        <rect x="5" y="2" width="3" height="2" fill="#3cb043" />
                        <rect x="13" y="5" width="3" height="2" fill="#c8403a" />
                        <rect x="22" y="4" width="3" height="2" fill="#3d86d8" />
                        <path d="M6 29v-7h3v-4h15v4h2v7h-5v-5H11v5z" fill="#a9d8ee" stroke="#6fb4d8" />
                    </svg>
                </Tile>
                <Tile $open><OfficeLogo color="#d24726" letter="P" dark="#d24726" /></Tile>
                <Tile><OfficeLogo color="#217346" letter="X" /></Tile>
                <Tile><OfficeLogo color="#077568" letter="P" /></Tile>
                <Tile $active $w={53} $mr={-3}><OfficeLogo color="#2b579a" letter="W" /></Tile>
                <Tile $active $w={5} $mr={-2} />
                <Tile $open $w={55} $mr={-3}>
                    <svg width="30" height="30" viewBox="0 0 30 30">
                        <circle cx="15" cy="15" r="15" fill="#e8453c" />
                        <path d="M15 15 2 7.500a15 15 0 0 0 6 20.500L15 30z" fill="#34a853" />
                        <path d="M15 8h13.500A15 15 0 0 1 15 30l6-12z" fill="#fbc02d" />
                        <circle cx="15" cy="15" r="7" fill="#fff" />
                        <circle cx="15" cy="15" r="5.500" fill="#4b8bf5" />
                    </svg>
                </Tile>
                <Tile $open $w={4} $mr={-1} />
                <Tile $open $w={59}>
                    <svg width="32" height="34" viewBox="0 0 32 34">
                        <path d="M3 2h22v30H3z" fill="#fff" stroke="#555" />
                        <path d="M4 18h20v13H4z" fill="#7cc242" />
                        <path d="M4 2h20M4 4h20" stroke="#999" strokeDasharray="1 1" />
                        <path d="M9 19V11c0-2 3-2 3 0v8M15 13h5M17.500 11v4" fill="none" stroke="#222" />
                        <path d="M27 3 19 25l-2 4 3-3 10-21z" fill="#f0a52b" stroke="#a86d12" strokeWidth=".6" />
                        <path d="M27 3l3 2 1-3-2-1z" fill="#a4342b" />
                    </svg>
                </Tile>
                <Tray>
                    <svg width="29" height="18" viewBox="0 0 29 18">
                        <rect x=".5" y=".5" width="28" height="17" rx="1" fill="#fff" stroke="#123" />
                        <path d="M3 3h23v8H3zM3 5.500h23M3 8.200h23M6 3v8M9 3v8M12 3v8M15 3v8M18 3v8M21 3v8M24 3v8M8 13.500h13" fill="none" stroke="#123" strokeWidth="1" />
                    </svg>
                    <TrayIcon $ml={14} width="8" height="5" viewBox="0 0 8 5">
                        <path d="M0 5l4-4 4 4z" fill="#fff" />
                    </TrayIcon>
                    <TrayIcon $ml={17} width="8" height="14" viewBox="0 0 8 14">
                        <path d="M0 4h3l5-4v14l-5-4H0z" fill="#fff" />
                    </TrayIcon>
                    <Clock>
                        7:10 PM
                        <br />
                        9/19/2016
                    </Clock>
                </Tray>
            </Taskbar>
        </Screen>
    );
}
